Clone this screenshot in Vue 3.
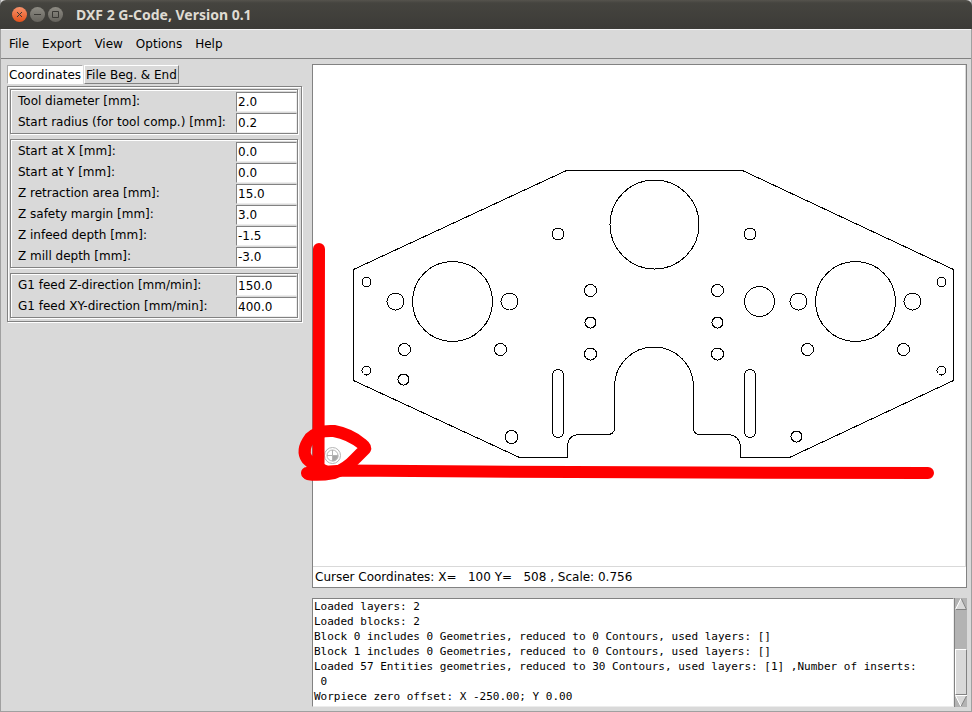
<script setup>
import { ref } from 'vue'

const menus = ['File', 'Export', 'View', 'Options', 'Help']
const tabs = ['Coordinates', 'File Beg. & End']
const activeTab = ref(0)

const groups = ref([
  [
    { id: 'tool-dia', label: 'Tool diameter [mm]:', value: '2.0' },
    { id: 'start-rad', label: 'Start radius (for tool comp.) [mm]:', value: '0.2' },
  ],
  [
    { id: 'start-x', label: 'Start at X [mm]:', value: '0.0' },
    { id: 'start-y', label: 'Start at Y [mm]:', value: '0.0' },
    { id: 'z-retract', label: 'Z retraction area [mm]:', value: '15.0' },
    { id: 'z-safety', label: 'Z safety margin [mm]:', value: '3.0' },
    { id: 'z-infeed', label: 'Z infeed depth [mm]:', value: '-1.5' },
    { id: 'z-mill', label: 'Z mill depth [mm]:', value: '-3.0' },
  ],
  [
    { id: 'feed-z', label: 'G1 feed Z-direction [mm/min]:', value: '150.0' },
    { id: 'feed-xy', label: 'G1 feed XY-direction [mm/min]:', value: '400.0' },
  ],
])

// Drill holes and cut-outs: centre x, centre y, radius
const holes = [
  [654.5, 224.5, 44.5], [452.5, 301.5, 40], [855.5, 301.5, 40], [759.5, 301.5, 15],
  [395.5, 301.5, 8.5], [509.5, 301.5, 8.5], [798.5, 301.5, 8.5], [912.5, 301.5, 8.5],
  [558, 234, 6], [750, 234, 6],
  [590.5, 290.5, 6], [590.5, 322.5, 5.5], [590.5, 354, 6],
  [717.5, 290.5, 6], [717.5, 322.5, 5.5], [717.5, 354, 6],
  [404.5, 349.5, 6], [500.5, 349.5, 6], [807.5, 349.5, 6], [903.5, 349.5, 6],
  [403.5, 379.5, 5.5], [511.5, 437, 6.5], [796.5, 436.5, 5.5],
  [366.5, 282, 4.5], [366.5, 370.5, 4.5], [941.5, 282, 4.5], [941.5, 370.5, 4.5],
]

const log = [
  'Loaded layers: 2',
  'Loaded blocks: 2',
  'Block 0 includes 0 Geometries, reduced to 0 Contours, used layers: []',
  'Block 1 includes 0 Geometries, reduced to 0 Contours, used layers: []',
  'Loaded 57 Entities geometries, reduced to 30 Contours, used layers: [1] ,Number of inserts:',
  ' 0',
  'Worpiece zero offset: X -250.00; Y 0.00',
].join('\n')
</script>

<template>
  <div class="window">
    <header class="titlebar">
      <button class="ctl close" aria-label="Close">
        <svg width="15" height="15" viewBox="0 0 15 15"><path d="M5 5l5 5M10 5l-5 5" /></svg>
      </button>
      <button class="ctl" aria-label="Minimize">
        <svg width="15" height="15" viewBox="0 0 15 15"><path d="M4 7.500h7" /></svg>
      </button>
      <button class="ctl" aria-label="Maximize">
        <svg width="15" height="15" viewBox="0 0 15 15"><path d="M4.500 4.500h6v6h-6z" /></svg>
      </button>
      <h1>DXF 2 G-Code, Version 0.1</h1>
    </header>

    <nav class="menubar">
      <button v-for="m in menus" :key="m">{{ m }}</button>
    </nav>

    <main class="body">
      <section class="side">
        <div class="tabs">
          <button
            v-for="(t, i) in tabs"
            :key="t"
            :class="{ active: i === activeTab }"
            @click="activeTab = i"
          >{{ t }}</button>
        </div>
        <form class="panel" @submit.prevent>
          <div v-for="(g, i) in groups" :key="i" class="group">
            <div v-for="f in g" :key="f.id" class="field">
              <label :for="f.id">{{ f.label }}</label>
              <input :id="f.id" v-model="f.value" type="text" />
            </div>
          </div>
        </form>
      </section>

      <section class="work">
        <div class="viewer">
          <div class="canvas">
            <svg class="drawing" width="653" height="500" viewBox="313 65 653 500">
              <g class="part">
                <path d="M566.500 170.500H742.500L953.500 269.500V380.500L789.500 457.500H740.500V446.500Q739.500 435.500 728.500 434.500H700.500Q693.500 434.500 693.500 427.500V386.500A39.500 39.500 0 0 0 614.500 386.500V427.500Q614.500 434.500 607.500 434.500H580.500Q567.500 434.500 567.500 447.500V457.500H519.500L353.500 380.500V269.500Z" />
                <rect x="552.500" y="369.500" width="11" height="68" rx="5.500" />
                <rect x="744.500" y="369.500" width="11" height="68" rx="5.500" />
                <circle v-for="(h, i) in holes" :key="i" :cx="h[0]" :cy="h[1]" :r="h[2]" />
              </g>
              <g class="origin">
                <circle cx="332.500" cy="455.500" r="8" />
                <circle cx="332.500" cy="455.500" r="5.500" />
                <path d="M332.500 450v11M327 455.500h11" />
                <path class="fill" d="M332.500 455.500h5.500a5.500 5.500 0 0 1-5.500 5.500z" />
              </g>
              <g class="marker">
                <path d="M319 249L318.500 468" />
                <path d="M307 473L345 470.500L480 471.500L700 472.500L928 473" />
                <path d="M308 474Q318 476 334 473Q346 469 356 458L365 449Q366 447 362 444Q350 434 334 431Q318 430 310 438Q301 450 307 459Q315 467 325 471" />
              </g>
            </svg>
          </div>
          <p class="status">Curser Coordinates: X=&nbsp;&nbsp; 100 Y=&nbsp;&nbsp; 508 , Scale: 0.756</p>
        </div>

        <div class="console">
          <textarea class="log" rows="7" readonly aria-label="Messages" :value="log"></textarea>
          <div class="scroll">
            <button aria-label="Scroll up">
              <svg width="12" height="12" viewBox="0 0 12 12"><path class="tri" d="M6 0L12 12H0z" /><path class="dim" d="M6 0L11.500 11.500H0" /><path class="lit" d="M.5 11.500L6 .5" /></svg>
            </button>
            <div class="track"><div class="thumb"></div></div>
            <button aria-label="Scroll down">
              <svg width="12" height="12" viewBox="0 0 12 12"><path class="tri" d="M0 0H12L6 12z" /><path class="lit" d="M6 11.500L.5 .5H12" /><path class="dim" d="M11.500 1L6 11.500" /></svg>
            </button>
          </div>
        </div>
      </section>
    </main>
  </div>
</template>

<style>
body {
  margin: 0;
  background: #d9d9d9;
}
</style>

<style scoped>
* {
  box-sizing: border-box;
}
.window {
  display: flex;
  flex-direction: column;
  min-height: 100vh;
  background: #d9d9d9;
  border: 1px solid #a0a0a0;
  border-top: 0;
  font-family: "DejaVu Sans", sans-serif;
  font-size: 12px;
  color: #000;
}
button,
input,
textarea {
  font: inherit;
  color: inherit;
  margin: 0;
  border-radius: 0;
}
.titlebar {
  display: flex;
  align-items: center;
  gap: 3px;
  height: 29px;
  margin: 0 -1px;
  padding: 0 12px;
  background: linear-gradient(#55534d, #45443f 3px, #3c3b37);
  border-radius: 6px 6px 0 0;
}
.titlebar h1 {
  margin: 0 0 0 10px;
  font: bold 14px/20px "Noto Sans", sans-serif;
  color: #dfdbd2;
}
.ctl {
  display: flex;
  width: 15px;
  height: 15px;
  padding: 0;
  border: 0;
  border-radius: 50%;
  background: linear-gradient(#8d8b83, #65635d);
}
.ctl.close {
  background: linear-gradient(#f7926b, #e4521c);
}
.ctl svg {
  fill: none;
  stroke: #3a3935;
}
.menubar {
  display: flex;
  gap: 13px;
  height: 30px;
  padding: 0 8px;
  border-top: 1px solid #f4f4f4;
  border-bottom: 1px solid #828282;
}
.menubar button {
  padding: 0;
  border: 0;
  background: none;
}
.body {
  flex: 1;
  display: flex;
  gap: 10px;
  padding: 5px 4px 4px 6px;
}
.side {
  flex: none;
  width: 295px;
  padding-top: 1px;
}
.tabs {
  display: flex;
  gap: 1px;
  margin-bottom: 2px;
}
.tabs button {
  height: 19px;
  padding: 1px 1px 0;
  line-height: 17px;
  background: #d9d9d9;
  border: 1px solid;
  border-color: #fff #828282 #828282 #fff;
}
.tabs button.active {
  background: #fff;
  border-color: #aaa #fff #fff #aaa;
}
/* Grooved frame: a dark line with a light line down and right of it */
.panel,
.group {
  border: 1px solid #828282;
  box-shadow: 1px 1px 0 #fff, inset 1px 1px 0 #fff;
}
.panel {
  display: flex;
  flex-direction: column;
  gap: 5px;
  padding: 2px 3px 3px 2px;
}
.group {
  padding: 1px 0 0 1px;
}
.field {
  display: flex;
  justify-content: space-between;
  height: 21px;
  padding-left: 6px;
}
.field label {
  line-height: 20px;
}
.field input {
  width: 61px;
  height: 20px;
  margin-top: 1px;
  padding: 0 1px;
  background: #fff;
  border: 1px solid;
  border-color: #828282 #ececec #ececec #828282;
  outline: 0;
}
.work {
  flex: 1;
  min-width: 0;
  display: flex;
  flex-direction: column;
  gap: 10px;
}
.viewer {
  flex: 1;
  display: flex;
  flex-direction: column;
  background: #fff;
  border: 1px solid #828282;
}
.canvas {
  flex: 1;
  border-right: 1px solid #d9d9d9;
  border-bottom: 1px solid #d9d9d9;
}
.drawing {
  display: block;
  overflow: visible;
}
.part {
  fill: none;
  stroke: #000;
  shape-rendering: crispEdges;
}
.origin {
  fill: none;
  stroke: #b4b4b4;
}
.origin .fill {
  fill: #a8a8a8;
}
.marker {
  fill: none;
  stroke: #f00;
  stroke-width: 12px;
  stroke-linecap: round;
  stroke-linejoin: round;
}
.status {
  margin: 0;
  padding: 0 2px;
  line-height: 20px;
}
.console {
  display: flex;
}
.log {
  flex: 1;
  min-width: 0;
  height: 109px;
  padding: 0 0 0 1px;
  border: 1px solid;
  border-color: #828282 #ececec #ececec #828282;
  background: #fff;
  resize: none;
  outline: 0;
  overflow: hidden;
  white-space: pre;
  font-family: "DejaVu Sans Mono", monospace;
  font-size: 11px;
  line-height: 15px;
}
.scroll {
  display: flex;
  flex-direction: column;
  width: 13px;
  background: #b3b3b3;
  border-left: 1px solid #828282;
}
.scroll button {
  display: flex;
  padding: 0;
  border: 0;
  background: none;
}
.track {
  flex: 1;
  display: flex;
  flex-direction: column;
  justify-content: flex-end;
}
.thumb {
  height: 54%;
  background: #d9d9d9;
  border: 1px solid;
  border-color: #fff #828282 #828282 #fff;
}
.tri {
  fill: #d9d9d9;
}
.lit {
  fill: none;
  stroke: #fff;
}
.dim {
  fill: none;
  stroke: #828282;
}
</style>
